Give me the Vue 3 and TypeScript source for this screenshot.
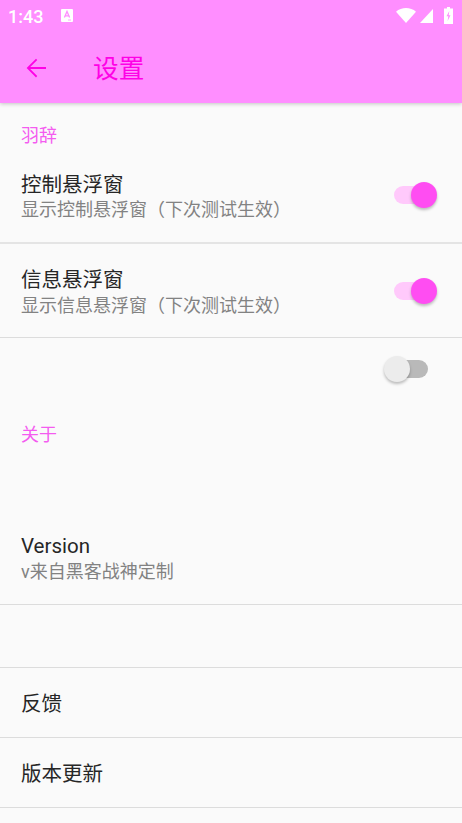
<script setup lang="ts">
</script>

<template>
  <div class="page">
    <header class="appbar">
      <div class="status">
        <span class="time">1:43</span>
        <svg class="a-icon" width="12" height="13" viewBox="0 0 12 13">
          <rect width="12" height="13" rx="1" fill="#fff" />
          <path d="M3.4 8.600 6 2.400l2.600 6.200M4.400 6.800h3.200" fill="none" stroke="#ff8eff" stroke-width="1.300" />
          <path d="M7 11h3" stroke="#ff8eff" stroke-width="0.800" />
        </svg>
        <span class="spacer"></span>
        <svg class="wifi" width="20" height="15" viewBox="0 0 20 15"><path d="M0 3.800C5.500-1.200 14.500-1.200 20 3.800L10 15Z" fill="#fff" /></svg>
        <svg class="sig" width="13" height="14" viewBox="0 0 13 14"><path d="M13 0V14H0Z" fill="#fff" /></svg>
        <svg class="bat" width="9" height="17" viewBox="0 0 9 17">
          <path d="M3 0h3v1.500h3V17H0V1.500h3Z" fill="#fff" />
          <path d="M5.300 4 2.500 9.300h1.800L3.600 14l2.900-5.700H4.700Z" fill="#ff8eff" />
        </svg>
      </div>
      <div class="toolbar">
        <svg class="back" width="30" height="30" viewBox="0 0 24 24">
          <path d="M20 11.200H7.400l5.600-5.600L12 4.500 4.500 12l7.500 7.500 1-1.100-5.600-5.600H20z" fill="#ff00e6" />
        </svg>
        <span class="title">设置</span>
      </div>
    </header>

    <main>
      <div class="cat first">羽辞</div>
      <div class="row pref p1">
        <div class="txt">
          <div class="t">控制悬浮窗</div>
          <div class="s">显示控制悬浮窗（下次测试生效）</div>
        </div>
        <div class="switch on"><i></i></div>
      </div>
      <div class="row pref p2">
        <div class="txt">
          <div class="t">信息悬浮窗</div>
          <div class="s">显示信息悬浮窗（下次测试生效）</div>
        </div>
        <div class="switch on"><i></i></div>
      </div>
      <div class="blank"><div class="switch off"><i></i></div></div>
      <div class="cat second">关于</div>
      <div class="row version">
        <div class="txt">
          <div class="t">Version</div>
          <div class="s">v来自黑客战神定制</div>
        </div>
      </div>
      <div class="row empty"></div>
      <div class="row single"><div class="t">反馈</div></div>
      <div class="row single"><div class="t">版本更新</div></div>
    </main>
  </div>
</template>

<style>
html, body { margin: 0; background: #fafafa; }
</style>

<style scoped>
.page {
  width: 462px;
  height: 823px;
  overflow: hidden;
  background: #fafafa;
  font-family: Roboto, "Noto Sans CJK SC", sans-serif;
}
.appbar {
  height: 103px;
  background: #ff8eff;
  box-shadow: 0 1px 4px rgba(0, 0, 0, 0.22);
  position: relative;
}
.status {
  height: 32px;
  display: flex;
  align-items: center;
  padding: 0 9px 0 8px;
  color: #fff;
}
.time { font-size: 18px; font-weight: 500; margin-top: 1px; }
.a-icon { margin-left: 18px; margin-top: -1px; }
.spacer { flex: 1; }
.wifi { margin-top: -1px; }
.sig { margin-left: 4px; margin-top: 0; }
.bat { margin-left: 11px; margin-top: -2px; }
.toolbar {
  height: 71px;
  display: flex;
  align-items: center;
  padding-left: 21px;
}
.title { margin-left: 42px; font-size: 25.67px; color: #ff00e6; margin-top: -2px; }
.cat { padding-left: 21px; font-size: 18px; color: #f45cf0; line-height: 22px; }
.first { padding-top: 22px; }
.second { margin-top: 24px; margin-bottom: -1px; }
.row { border-bottom: 1px solid #dcdcdc; display: flex; align-items: center; padding: 0 34px 0 21px; box-sizing: border-box; }
.p1 { height: 97px; border-bottom: 2px solid #e4e4e4; }
.p1 .txt { padding-top: 4px; }
.p2 { height: 94px; }
.p2 .txt { padding-top: 3px; }
.p2 .s, .version .s { padding-top: 1px; }
.t { font-size: 20.53px; color: #262626; line-height: 26px; }
.s { font-size: 18px; color: #828282; line-height: 24px; }
.txt { flex: 1; }
.switch { width: 34px; height: 18px; border-radius: 9px; position: relative; }
.switch i { position: absolute; width: 26px; height: 26px; border-radius: 50%; top: -4px; box-shadow: 0 2px 3px rgba(0, 0, 0, 0.25); }
.switch.on { background: #ffc9fb; }
.switch.on i { right: -9px; background: #ff4df2; }
.switch.off { background: #b9b9b9; }
.switch.off i { left: -10px; background: #ececec; }
.blank { height: 62px; display: flex; align-items: center; justify-content: flex-end; padding-right: 34px; }
.version { height: 160px; align-items: flex-end; padding-bottom: 20px; }
.empty { height: 63px; }
.single { height: 70px; padding-top: 2px; }
</style>
